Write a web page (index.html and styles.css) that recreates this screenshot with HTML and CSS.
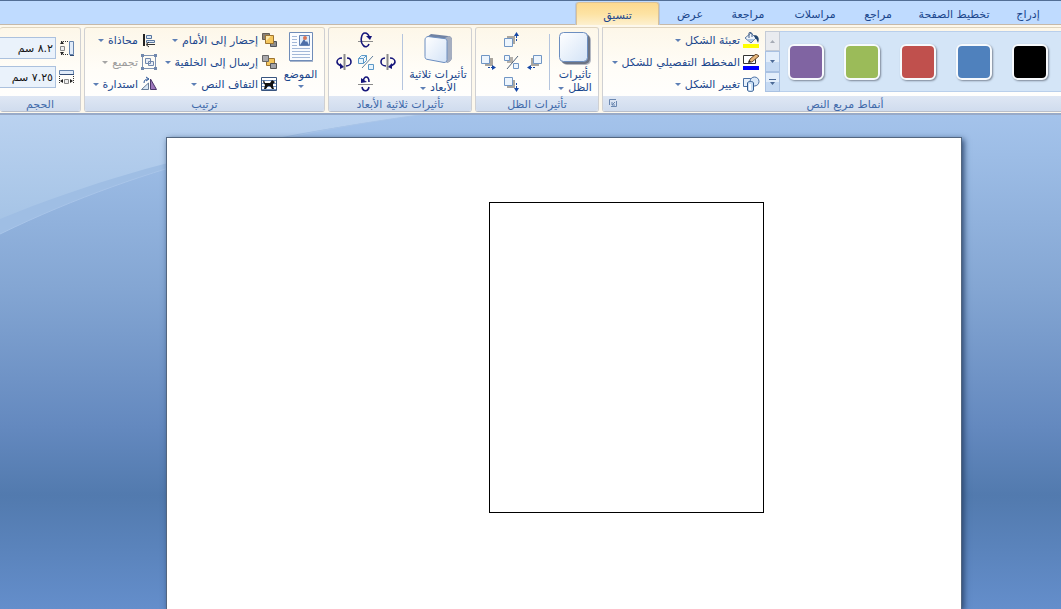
FILE: index.html
```html
<!DOCTYPE html>
<html lang="ar" dir="rtl">
<head>
<meta charset="utf-8">
<title>تنسيق مربع النص</title>
<link rel="stylesheet" href="styles.css">
</head>
<body>
<nav class="tabs">
  <a class="tab w-insert" href="#">إدراج</a>
  <a class="tab w-layout" href="#">تخطيط الصفحة</a>
  <a class="tab w-refs" href="#">مراجع</a>
  <a class="tab w-mail" href="#">مراسلات</a>
  <a class="tab w-review" href="#">مراجعة</a>
  <a class="tab w-view" href="#">عرض</a>
  <a class="tab active" href="#">تنسيق</a>
</nav>

<div class="ribbon">
  <section class="group styles">
    <div class="body">
      <div class="gallery">
        <button class="swatch black" aria-label="أسود"></button>
        <button class="swatch blue" aria-label="أزرق"></button>
        <button class="swatch red" aria-label="أحمر"></button>
        <button class="swatch green" aria-label="أخضر"></button>
        <button class="swatch purple" aria-label="بنفسجي"></button>
      </div>
      <div class="scroller">
        <button class="scroll off" aria-label="أعلى"><svg width="5" height="3"><path d="M0 3L2.500 0L5 3z"/></svg></button>
        <button class="scroll" aria-label="أسفل"><svg width="5" height="3"><path d="M0 0h5L2.500 3z"/></svg></button>
        <button class="scroll" aria-label="المزيد"><svg width="7" height="6"><path d="M0 0h7v1H0zM1 3h5L3.500 6z"/></svg></button>
      </div>
      <div class="column fill">
        <button class="cmd">
          <svg width="17" height="16" viewBox="0 0 17 16"><path d="M2 6l6-5 5 5-5 5z" fill="#eef4fb" stroke="#5d7ba3"/><path d="M4 7h8l-4 3z" fill="#a8c2e0"/><path d="M6 6V1c0-1 3-1 3 1v3" fill="none" stroke="#425f88"/><path d="M11 3c4 0 6 3 4 8-1-2-1-4-3-5z" fill="#24466f"/><path d="M0 12h16v4H0z" fill="#ff0"/></svg>
          <span>تعبئة الشكل</span><i class="arrow"></i></button>
        <button class="cmd">
          <svg width="17" height="16" viewBox="0 0 17 16"><path d="M.5 1.500h12v8H.5z" fill="#fff" stroke="#333"/><path d="M6 8l1-3 6-5 3 2-7 6z" fill="#e6b578" stroke="#6b4c2c"/><path d="M5 9l1-3 2 2z" fill="#222"/><path d="M0 12h16v4H0z" fill="#00f"/></svg>
          <span>المخطط التفصيلي للشكل</span><i class="arrow"></i></button>
        <button class="cmd">
          <svg width="17" height="16" viewBox="0 0 17 16"><path d="M.5 2.500h9v8h-9z" fill="#e8f1fb" stroke="#4a70a4"/><circle cx="11.500" cy="5.500" r="4.500" fill="#dbe9f8" stroke="#4a70a4"/><path d="M4.500 7v7c0 2 6 2 6 0V7c0-2-6-2-6 0z" fill="#cbdff4" stroke="#315b91"/><path d="M7 8v6" stroke="#fff" stroke-width="2"/></svg>
          <span>تغيير الشكل</span><i class="arrow"></i></button>
      </div>
    </div>
    <h2 class="caption">أنماط مربع النص</h2>
    <button class="launcher" aria-label="خيارات"><svg width="8" height="8" viewBox="0 0 8 8" fill="none" stroke="#6b87b0"><path d="M.5 6V.5H7M7.500 2v5.500H2M6 3L3 6M3 3v3h3"/></svg></button>
  </section>

  <section class="group shadow">
    <div class="body">
      <button class="big">
        <svg width="32" height="34" viewBox="0 0 32 34"><defs><linearGradient id="tile" x2="1" y2="1"><stop stop-color="#fff"/><stop offset="1" stop-color="#d3e3f7"/></linearGradient></defs><rect x="3" y="3" width="29" height="30" rx="5" fill="#b4b8c2"/><rect x="2" y="2" width="29" height="30" rx="5" fill="#6c7484"/><rect x=".5" y=".5" width="28" height="29" rx="4" fill="url(#tile)" stroke="#6c8ec0"/></svg>
        <span>تأثيرات</span><span>الظل<i class="arrow"></i></span></button>
      <div class="divider"></div>
      <div class="pad">
        <button class="up" aria-label="ظل لأعلى"><svg width="16" height="16" viewBox="0 0 16 16"><path d="M3 4h8v8H3z" fill="#aaa69f"/><path d="M.5 6.500h8v8h-8z" fill="#edf5fd" stroke="#7196c4"/><path d="M12.500 9V2" stroke="#1748a5" stroke-dasharray="2 1"/><path d="M10 4l2.500-4L15 4z" fill="#1748a5"/></svg></button>
        <button class="west" aria-label="ظل لليسار"><svg width="16" height="16" viewBox="0 0 16 16"><path d="M4 4h8v8H4z" fill="#aaa69f"/><path d="M.5 1.500h8v8h-8z" fill="#edf5fd" stroke="#7196c4"/><path d="M7 13.500h6" stroke="#1748a5" stroke-dasharray="2 1"/><path d="M11 11l4 2.500-4 2.500z" fill="#1748a5"/></svg></button>
        <button class="mid" aria-label="تشغيل الظل"><svg width="16" height="16" viewBox="0 0 16 16"><path d="M3 3h6v6H3z" fill="#b4b0aa"/><path d="M.5 1.500h5v5h-5zM9.500 9.500h5v5h-5z" fill="#edf5fd" stroke="#7196c4"/><path d="M3 15L14 2" stroke="#52637b"/></svg></button>
        <button class="east" aria-label="ظل لليمين"><svg width="16" height="16" viewBox="0 0 16 16"><path d="M4 4h8v8H4z" fill="#aaa69f"/><path d="M6.500 1.500h8v8h-8z" fill="#edf5fd" stroke="#7196c4"/><path d="M3 13.500h6" stroke="#1748a5" stroke-dasharray="2 1"/><path d="M4 11l-4 2.500L4 16z" fill="#1748a5"/></svg></button>
        <button class="down" aria-label="ظل لأسفل"><svg width="16" height="16" viewBox="0 0 16 16"><path d="M3 4h8v8H3z" fill="#aaa69f"/><path d="M.5 1.500h8v8h-8z" fill="#edf5fd" stroke="#7196c4"/><path d="M12.500 7v6" stroke="#1748a5" stroke-dasharray="2 1"/><path d="M10 12l2.500 4 2.500-4z" fill="#1748a5"/></svg></button>
      </div>
    </div>
    <h2 class="caption">تأثيرات الظل</h2>
  </section>

  <section class="group depth">
    <div class="body">
      <button class="big">
        <svg width="32" height="34" viewBox="0 0 32 34"><path d="M5 5l4-3 17 2c3 0 4 2 4 4v17c0 3-2 5-5 6z" fill="#7183a3"/><path d="M23 6l4-2c2 1 3 2 3 4v17c0 3-2 5-5 6z" fill="#a5aec0"/><path d="M6 4.500l16 2c2 0 3 1 3 3v18c0 2-1 3-3 3l-16-3c-2 0-3-1-3-3V8c0-2 1-3 3-3.500z" fill="url(#tile)" stroke="#6c8ec0"/></svg>
        <span>تأثيرات ثلاثية</span><span>الأبعاد<i class="arrow"></i></span></button>
      <div class="divider"></div>
      <div class="pad tilt">
        <button class="up" aria-label="إمالة لأعلى"><svg width="16" height="16" viewBox="0 0 16 16"><path d="M0 9.500h15" stroke="#8b8b8b"/><path d="M5 13C2 10 3 1 7 1c2 0 4 2 4 4M5 13c2 3 5 2 6-1" fill="none" stroke="#15157a" stroke-width="1.600"/><path d="M8 4l6 0-2 4z" fill="#15157a"/></svg></button>
        <button class="west" aria-label="إمالة لليسار"><svg width="16" height="16" viewBox="0 0 16 16"><path d="M8.500 0v16" stroke="#8b8b8b" stroke-width="2"/><path d="M6 4C3 4 1 6 1 8s2 3 4 4M11 4c3 0 4 2 4 4s-2 4-5 4" fill="none" stroke="#15157a" stroke-width="1.600"/><path d="M4 9v6l4-2z" fill="#15157a"/></svg></button>
        <button class="mid" aria-label="تشغيل الأبعاد الثلاثية"><svg width="16" height="16" viewBox="0 0 16 16"><path d="M.5 4.500h5v5h-5zM.5 4.500l3-3h5l-3 3M8.500 1.500v5l-3 3M10.500 10.500h5v5h-5z" fill="#e8f4fc" stroke="#5b98c7"/><path d="M4 14L15 2" stroke="#607e9c"/></svg></button>
        <button class="east" aria-label="إمالة لليمين"><svg width="16" height="16" viewBox="0 0 16 16"><path d="M7.500 0v16" stroke="#8b8b8b" stroke-width="2"/><path d="M10 4c3 0 5 2 5 4s-2 3-4 4M5 4C2 4 1 6 1 8s2 4 5 4" fill="none" stroke="#15157a" stroke-width="1.600"/><path d="M12 9v6l-4-2z" fill="#15157a"/></svg></button>
        <button class="down" aria-label="إمالة لأسفل"><svg width="16" height="16" viewBox="0 0 16 16"><path d="M0 8.500h15" stroke="#8b8b8b"/><path d="M5 5c1-3 2-4 3-4 2 0 3 2 3 5M4 11c1 5 6 5 7 0" fill="none" stroke="#15157a" stroke-width="1.600"/><path d="M3 2v5l6-1z" fill="#15157a"/></svg></button>
      </div>
    </div>
    <h2 class="caption">تأثيرات ثلاثية الأبعاد</h2>
  </section>

  <section class="group arrange">
    <div class="body">
      <button class="big place">
        <svg width="24" height="30" viewBox="0 0 24 30"><path d="M.5.5h23v28H.5z" fill="#fafcff" stroke="#6f8cb8"/><path d="M1 29.500h23" stroke="#a7b5cb"/><path d="M3 4.500h5M3 7.500h5M3 10.500h5M3 13.500h5M3 16.500h18M3 19.500h18M3 22.500h18M3 25.500h18" stroke="#a3b8d8"/><path d="M10.500 3.500h10v10h-10z" fill="#dceafa" stroke="#6584b5"/><path d="M11 13l4-6 2 3 1-1 2 4z" fill="#4e6fa9"/><circle cx="16" cy="6" r="2" fill="#dc7452"/></svg>
        <span>الموضع</span><i class="arrow"></i></button>
      <div class="column front">
        <button class="cmd"><svg width="16" height="16" viewBox="0 0 16 16"><path d="M1.500 1.500h7v6h-7z" fill="#8a8175" stroke="#655e56"/><path d="M9.500 9.500h6v5h-6z" fill="#8d8d8d" stroke="#50545d"/><path d="M4.500 3.500h8v8h-8z" fill="#f4c65d" stroke="#9d7430"/><path d="M5 4h5L5 9z" fill="#fde9ad"/></svg>
          <span>إحضار إلى الأمام</span><i class="arrow"></i></button>
        <button class="cmd"><svg width="16" height="16" viewBox="0 0 16 16"><path d="M5.500 4.500h8v7h-8z" fill="#f4c65d" stroke="#9d7430"/><path d="M1.500 1.500h6v6h-6z" fill="#aaa9ac" stroke="#666"/><path d="M9.500 9.500h6v5h-6z" fill="#a2a3a9" stroke="#555"/></svg>
          <span>إرسال إلى الخلفية</span><i class="arrow"></i></button>
        <button class="cmd"><svg width="16" height="16" viewBox="0 0 16 16"><path d="M.5 1.500h15v13H.5z" fill="#fff" stroke="#39557f"/><path d="M1 4.500h14M1 7.500h14M1 10.500h14M1 13.500h14" stroke="#6f90bf"/><path d="M3 4l1 3h5l2-3 3 2-2 2v2l1 3h-2l-2-3H7l-2 3H3l1-4-2-3z" fill="#111"/></svg>
          <span>التفاف النص</span><i class="arrow"></i></button>
      </div>
      <div class="column">
        <button class="cmd"><svg width="16" height="16" viewBox="0 0 16 16"><path d="M3 2v12" stroke="#222" stroke-width="2"/><path d="M5.500 3.500h5v3h-5zM5.500 8.500h8v2h-8z" fill="#dce8f6" stroke="#58769f"/><path d="M6 12.500h8M8 10l-3 2.500L8 15" fill="none" stroke="#333"/></svg>
          <span>محاذاة</span><i class="arrow"></i></button>
        <button class="cmd off" disabled><svg width="16" height="16" viewBox="0 0 16 16"><path d="M1.500 1.500h13v13h-13z" fill="none" stroke="#8094b3"/><path d="M4.500 4.500h5v5h-5zM7.500 7.500h5v4h-5z" fill="#e9eef6" stroke="#7188ad"/><path d="M0 0h3v3H0zM13 0h3v3h-3zM0 13h3v3H0zM13 13h3v3h-3z" fill="#7188ad"/></svg>
          <span>تجميع</span><i class="arrow"></i></button>
        <button class="cmd"><svg width="16" height="16" viewBox="0 0 16 16"><path d="M7.500 13.500h-7L7.500 7z" fill="#dae7f5" stroke="#687d98"/><path d="M9.500 3v10.500h6z" fill="#9d76bb" stroke="#4c3869"/><path d="M3 7c0-3 2-4 4-4M5 1l3 2-3 2" fill="none" stroke="#2b5698"/></svg>
          <span>استدارة</span><i class="arrow"></i></button>
      </div>
    </div>
    <h2 class="caption">ترتيب</h2>
  </section>

  <section class="group size">
    <div class="body fields">
      <label class="field"><svg width="16" height="16" viewBox="0 0 16 16"><path d="M10.500 1.500h4v13h-4z" fill="#e1ebf8" stroke="#6785ae"/><path d="M11 15.500h4" stroke="#344d75"/><path d="M1.500 6.500h4v4h-4z" fill="#eee" stroke="#888"/><path d="M2 1.500h7M2 14.500h7" stroke="#333" stroke-dasharray="1 1"/><path d="M1 4l2-3 2 3zM1 12l2 3 2-3z" fill="#222"/></svg>
        <input type="text" value="٨.٢ سم" aria-label="الارتفاع"></label>
      <label class="field"><svg width="16" height="16" viewBox="0 0 16 16"><path d="M.5 1.500h14v4H.5z" fill="#e1ebf8" stroke="#6785ae"/><path d="M1 5.500h14" stroke="#344d75"/><path d="M5.500 10.500h4v4h-4z" fill="#eee" stroke="#888"/><path d="M.5 7v7M14.500 7v7" stroke="#333" stroke-dasharray="1 1"/><path d="M4 10l-3 2 3 2zM11 10l3 2-3 2z" fill="#222"/></svg>
        <input type="text" value="٧.٢٥ سم" aria-label="العرض"></label>
    </div>
    <h2 class="caption">الحجم</h2>
  </section>
</div>

<main class="desk">
  <svg class="swoosh" width="420" height="120" viewBox="0 0 420 120"><defs><linearGradient id="glow" x2="0" y2="1"><stop stop-color="#bad2f0"/><stop offset="1" stop-color="#a6c4e6"/></linearGradient></defs><path d="M0 0H420C300 16 150 46 0 119z" fill="#9fbee4"/><path d="M0 0H420C300 16 150 42 0 104z" fill="url(#glow)"/><path d="M420 0C300 16 150 46 0 119" fill="none" stroke="#a9c5e9"/></svg>
  <article class="sheet"><div class="textbox"></div></article>
</main>
</body>
</html>
```
FILE: styles.css
```css
* { box-sizing: border-box; }

body {
  margin: 0;
  min-height: 100vh;
  display: flex;
  flex-direction: column;
  overflow: hidden;
  font-family: "DejaVu Sans", sans-serif;
  font-size: 11px;
  line-height: 13px;
  color: #1b478d;
}

button {
  margin: 0;
  padding: 0;
  border: 0;
  background: none;
  font: inherit;
  color: inherit;
}

svg { display: block; flex: none; }

.tabs {
  display: flex;
  height: 25px;
  padding-right: 8px;
  background: #bfdbff;
  border-top: 1px solid #536f96;
  border-bottom: 1px solid #c6b9a9;
}

.tab {
  display: flex;
  align-items: center;
  justify-content: center;
  padding-top: 3px;
  color: inherit;
  text-decoration: none;
  white-space: nowrap;
}
.w-insert { width: 50px; }
.w-layout { width: 98px; }
.w-refs { width: 54px; }
.w-mail { width: 72px; }
.w-review { width: 62px; }
.w-view { width: 54px; }

.tab.active {
  width: 83px;
  margin: 1px 4px -1px 0;
  border: 1px solid #d9c198;
  border-bottom: 0;
  border-radius: 3px 3px 0 0;
  background: linear-gradient(#fcd98f, #fde3a4 50%, #fdf0cf);
  box-shadow: 1px 0 0 #b3c6e0, -1px 0 0 #b3c6e0;
}

.ribbon {
  display: flex;
  gap: 3px;
  padding: 2px 0 1px;
  background: #fdf8ec;
  border-bottom: 2px solid #98aac8;
}

.group {
  position: relative;
  display: flex;
  flex-direction: column;
  flex: none;
  border: 1px solid #d5cec4;
  border-color: #e0d5bf #cfd0d3 #b9bfcb;
  border-radius: 3px;
  background: linear-gradient(#fdf7e9, #fffdf8 50%, #fff);
  overflow: hidden;
}

.body {
  display: flex;
  height: 68px;
  padding-top: 1px;
}

.caption {
  margin: 0;
  height: 15px;
  background: linear-gradient(#dfe7f4, #d0dcee);
  color: #416aaa;
  font-size: 11px;
  font-weight: normal;
  line-height: 17px;
  text-align: center;
}

.group.styles {
  flex: 1;
  border-right: 0;
  border-radius: 0 0 0 3px;
}
.styles .caption { padding-left: 26px; }
.shadow { width: 124px; }
.depth { width: 144px; }
.arrange { width: 241px; }
.size { width: 81px; border-left: 0; }

.gallery {
  flex: 1;
  display: flex;
  align-items: center;
  gap: 20px;
  height: 61px;
  margin-top: 2px;
  padding-right: 13px;
  background: #d4e5f7;
  border: solid #b9cfeb;
  border-width: 1px 0;
}

.swatch {
  width: 36px;
  height: 36px;
  border: 2px solid #f7fafd;
  border-radius: 6px;
  box-shadow: 1px 1px 2px #7c8797;
}
.black { background: #000; }
.blue { background: #4f81bd; }
.red { background: #c0504d; }
.green { background: #9bbb59; }
.purple { background: #8064a2; }

.scroller {
  display: flex;
  flex-direction: column;
  width: 15px;
  height: 61px;
  margin-top: 2px;
}
.scroll {
  flex: 1;
  display: flex;
  align-items: center;
  justify-content: center;
  border: 1px solid #a9c1e2;
  background: linear-gradient(#e3eefb 50%, #c6daf3 50%);
  fill: #4c6a97;
}
.scroll.off {
  background: #e9ebef;
  border-color: #c4cbd6;
  fill: #a6abb5;
}

.column {
  display: flex;
  flex-direction: column;
  flex: none;
  padding-right: 5px;
}
.fill { width: 162px; }
.front { width: 115px; padding-right: 0; }

.cmd {
  display: flex;
  align-items: center;
  gap: 3px;
  height: 22px;
  white-space: nowrap;
}
.cmd.off { color: #9b9b9b; }

.arrow {
  display: inline-block;
  width: 5px;
  border: solid transparent;
  border-top-color: #5d7fb5;
  border-width: 3px 3px 0;
  vertical-align: middle;
}
.cmd .arrow { margin-right: 1px; }
span .arrow { margin-right: 4px; }
.off .arrow { border-top-color: #a5a5a5; }

.big {
  display: flex;
  flex-direction: column;
  align-items: center;
  flex: none;
  padding-top: 3px;
  white-space: nowrap;
}
.big svg + span { margin-top: 2px; }
.shadow .big { width: 46px; }
.depth .big { width: 66px; }
.big.place { width: 47px; gap: 4px; }

.divider {
  width: 1px;
  height: 56px;
  margin: 5px 2px 0 3px;
  background: #b5c5de;
}

.pad {
  direction: ltr;
  display: grid;
  grid-template: repeat(3, 22px) / repeat(3, 23px);
  place-items: center;
}
.tilt { grid-template-columns: repeat(3, 22px); }
.up { grid-area: 1 / 2; }
.west { grid-area: 2 / 1; }
.mid { grid-area: 2 / 2; }
.east { grid-area: 2 / 3; }
.down { grid-area: 3 / 2; }

.launcher {
  position: absolute;
  left: 6px;
  bottom: 4px;
}

.fields {
  flex-direction: column;
  gap: 7px;
  padding: 9px 5px 0 0;
}
.field {
  display: flex;
  align-items: center;
  gap: 3px;
}
.field input {
  flex: 1;
  min-width: 0;
  height: 22px;
  padding: 0 2px;
  border: 1px solid #abc1de;
  border-left: 0;
  background: #eaf2fb;
  color: #111;
  font: inherit;
}

.desk {
  position: relative;
  flex: 1;
  display: flex;
  padding: 22px 99px 0 166px;
  background: linear-gradient(#a4c3eb, #9dbde6 8%, #84a6d3 35%, #6489bf 63%, #527aae 77%, #648ecb);
}

.swoosh {
  position: absolute;
  left: 0;
  top: 0;
}

.sheet {
  position: relative;
  flex: 1;
  padding: 64px 197px 0 0;
  border: 1px solid #53667f;
  border-bottom: 0;
  background: #fff;
  box-shadow: 2px 2px 6px #2b466d;
}

.textbox {
  width: 275px;
  height: 311px;
  border: 1px solid #000;
}
```
